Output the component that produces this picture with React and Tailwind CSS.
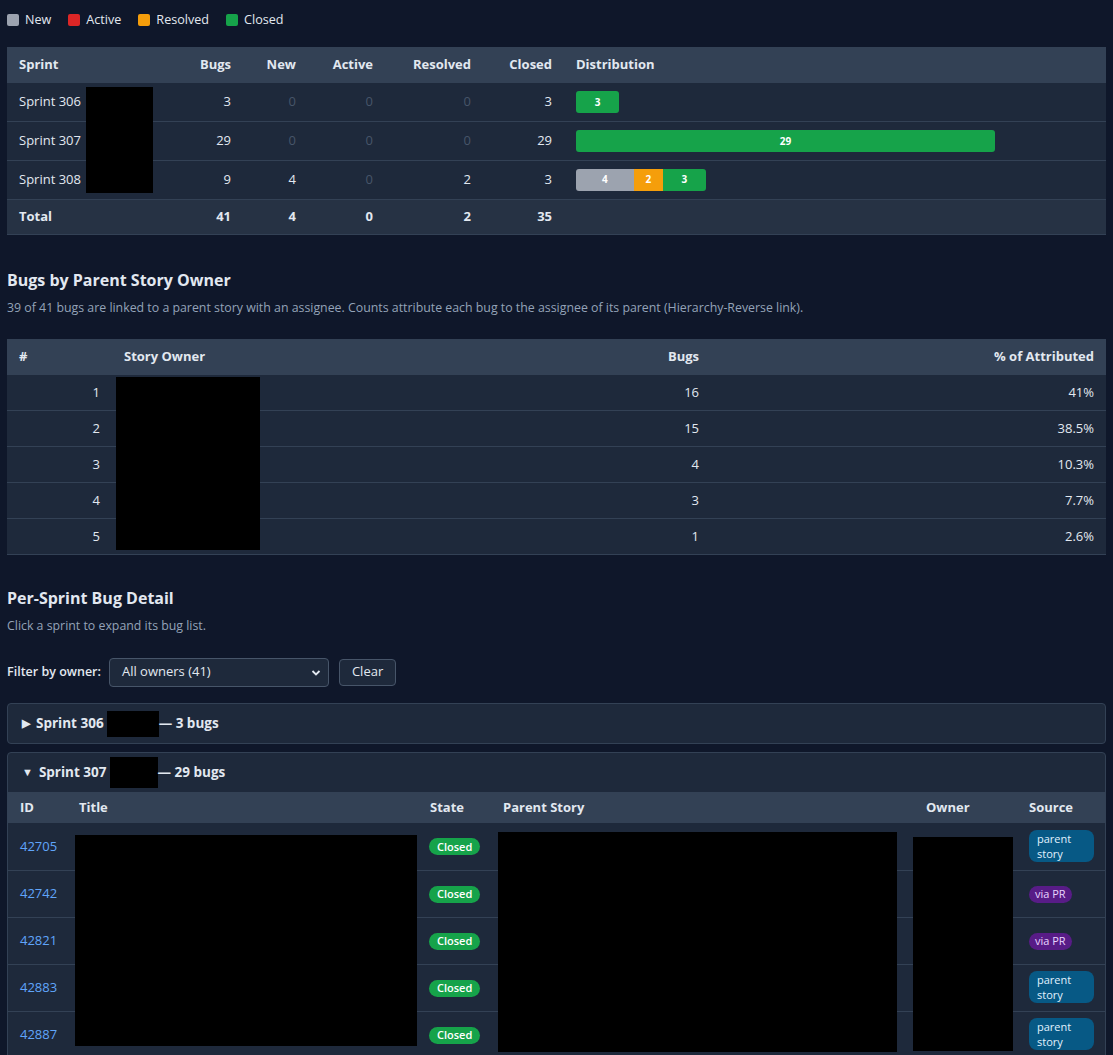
import React from "react";

const F = "font-['Segoe_UI','Open_Sans',sans-serif]";

function Legend() {
  const items = [
    ["New", "bg-[#9ca3af]"],
    ["Active", "bg-[#dc2626]"],
    ["Resolved", "bg-[#f59e0b]"],
    ["Closed", "bg-[#16a34a]"],
  ];
  return (
    <div className="flex items-center gap-[17px] h-[14px] text-[12.6px] text-[#e2e8f0]">
      {items.map(([l, c]) => (
        <div key={l} className="flex items-center gap-[6px]">
          <span className={`inline-block w-[12px] h-[12px] rounded-[2px] ${c}`} />
          <span>{l}</span>
        </div>
      ))}
    </div>
  );
}

const UNIT = 14.45;

function Dist({ n, a, r, c }) {
  const segs = [
    [n, "bg-[#9ca3af]"],
    [a, "bg-[#dc2626]"],
    [r, "bg-[#f59e0b]"],
    [c, "bg-[#16a34a]"],
  ].filter(([v]) => v > 0);
  return (
    <div className="flex h-[22px] rounded-[3px] overflow-hidden w-fit">
      {segs.map(([v, cl], i) => (
        <div
          key={i}
          className={`${cl} flex items-center justify-center text-[10px] font-bold text-white`}
          style={{ width: v * UNIT }}
        >
          {v}
        </div>
      ))}
    </div>
  );
}

function SprintTable() {
  const rows = [
    ["Sprint 306", 3, 0, 0, 0, 3],
    ["Sprint 307", 29, 0, 0, 0, 29],
    ["Sprint 308", 9, 4, 0, 2, 3],
  ];
  const num = (v) => (
    <span className={v === 0 ? "text-[#475569]" : ""}>{v}</span>
  );
  return (
    <div className="relative">
      <table className="w-full table-fixed border-collapse text-[13px] text-[#e2e8f0]">
        <colgroup>
          <col className="w-[163px]" />
          <col className="w-[73px]" />
          <col className="w-[65px]" />
          <col className="w-[77px]" />
          <col className="w-[98px]" />
          <col className="w-[81px]" />
          <col />
        </colgroup>
        <thead>
          <tr className="bg-[#334155] h-[36px] font-semibold">
            <th className="text-left px-[12px]">Sprint</th>
            <th className="text-right px-[12px]">Bugs</th>
            <th className="text-right px-[12px]">New</th>
            <th className="text-right px-[12px]">Active</th>
            <th className="text-right px-[12px]">Resolved</th>
            <th className="text-right px-[12px]">Closed</th>
            <th className="text-left px-[12px]">Distribution</th>
          </tr>
        </thead>
        <tbody>
          {rows.map((r) => (
            <tr key={r[0]} className="bg-[#1e293b] h-[38.7px] border-b border-[#334155]">
              <td className="px-[12px]">{r[0]}</td>
              <td className="px-[12px] text-right">{num(r[1])}</td>
              <td className="px-[12px] text-right">{num(r[2])}</td>
              <td className="px-[12px] text-right">{num(r[3])}</td>
              <td className="px-[12px] text-right">{num(r[4])}</td>
              <td className="px-[12px] text-right">{num(r[5])}</td>
              <td className="px-[12px]">
                <Dist n={r[2]} a={r[3]} r={r[4]} c={r[5]} />
              </td>
            </tr>
          ))}
          <tr className="bg-[#263244] h-[35px] font-bold border-b border-[#334155]">
            <td className="px-[12px]">Total</td>
            <td className="px-[12px] text-right">41</td>
            <td className="px-[12px] text-right">4</td>
            <td className="px-[12px] text-right">0</td>
            <td className="px-[12px] text-right">2</td>
            <td className="px-[12px] text-right">35</td>
            <td />
          </tr>
        </tbody>
      </table>
      <div className="absolute left-[79px] top-[40px] w-[67px] h-[106px] bg-black" />
    </div>
  );
}

function OwnerTable() {
  const rows = [
    [1, 16, "41%"],
    [2, 15, "38.5%"],
    [3, 4, "10.3%"],
    [4, 3, "7.7%"],
    [5, 1, "2.6%"],
  ];
  return (
    <div className="relative">
      <table className="w-full table-fixed border-collapse text-[13px] text-[#e2e8f0]">
        <colgroup>
          <col className="w-[105px]" />
          <col className="w-[400px]" />
          <col />
          <col className="w-[395px]" />
        </colgroup>
        <thead>
          <tr className="bg-[#334155] h-[36px] font-semibold">
            <th className="text-left px-[12px]">#</th>
            <th className="text-left px-[12px]">Story Owner</th>
            <th className="text-right px-[12px]">Bugs</th>
            <th className="text-right px-[12px]">% of Attributed</th>
          </tr>
        </thead>
        <tbody>
          {rows.map((r) => (
            <tr key={r[0]} className="bg-[#1e293b] h-[36px] border-b border-[#334155]">
              <td className="px-[12px] text-right">{r[0]}</td>
              <td className="px-[12px]"></td>
              <td className="px-[12px] text-right">{r[1]}</td>
              <td className="px-[12px] text-right">{r[2]}</td>
            </tr>
          ))}
        </tbody>
      </table>
      <div className="absolute left-[109px] top-[38px] w-[144px] h-[173px] bg-black" />
    </div>
  );
}

function Closed() {
  return (
    <span className="inline-flex items-center h-[17px] px-[8px] rounded-full bg-[#16a34a] text-white text-[11px] font-semibold">
      Closed
    </span>
  );
}

function Source({ pr }) {
  if (pr)
    return (
      <span className="inline-flex items-center h-[17px] px-[6px] rounded-[9px] bg-[#581c87] text-[#e9d5ff] text-[11px]">
        via PR
      </span>
    );
  return (
    <span className="inline-block w-[65px] px-[8px] py-[1px] rounded-[8px] bg-[#075985] text-[#e0f2fe] text-[11px] leading-[15px]">
      parent story
    </span>
  );
}

function BugTable() {
  const bugs = [
    ["42705", false],
    ["42742", true],
    ["42821", true],
    ["42883", false],
    ["42887", false],
  ];
  return (
    <div className="relative">
      <table className="w-full table-fixed border-collapse text-[13px] text-[#e2e8f0]">
        <colgroup>
          <col className="w-[59px]" />
          <col className="w-[351px]" />
          <col className="w-[73px]" />
          <col className="w-[423px]" />
          <col className="w-[103px]" />
          <col />
        </colgroup>
        <thead>
          <tr className="bg-[#334155] h-[31px] font-semibold">
            <th className="text-left px-[12px]">ID</th>
            <th className="text-left px-[12px]">Title</th>
            <th className="text-left px-[12px]">State</th>
            <th className="text-left px-[12px]">Parent Story</th>
            <th className="text-left px-[12px]">Owner</th>
            <th className="text-left px-[12px]">Source</th>
          </tr>
        </thead>
        <tbody>
          {bugs.map(([id, pr]) => (
            <tr key={id} className="h-[47px] border-b border-[#334155]">
              <td className="px-[12px] text-[#60a5fa]">{id}</td>
              <td className="px-[12px]"></td>
              <td className="px-[11px]">
                <Closed />
              </td>
              <td className="px-[12px]"></td>
              <td className="px-[12px]"></td>
              <td className="px-[12px]">
                <Source pr={pr} />
              </td>
            </tr>
          ))}
        </tbody>
      </table>
      <div className="absolute left-[67px] top-[43px] w-[342px] h-[211px] bg-black" />
      <div className="absolute left-[490px] top-[40px] w-[399px] h-[220px] bg-black" />
      <div className="absolute left-[905px] top-[45px] w-[100px] h-[214px] bg-black" />
    </div>
  );
}

export default function App() {
  return (
    <div className={`${F} min-h-[1055px] bg-[#0f172a] text-[#e2e8f0] px-[7px] pt-[13px] pb-[40px]`}>
      <Legend />
      <div className="mt-[20px]">
        <SprintTable />
      </div>

      <h2 className="mt-[33px] text-[16px] font-bold leading-[24px]">Bugs by Parent Story Owner</h2>
      <p className="mt-[7px] text-[12.35px] text-[#94a3b8] leading-[18px]">
        39 of 41 bugs are linked to a parent story with an assignee. Counts attribute each bug to the assignee of its parent (Hierarchy-Reverse link).
      </p>
      <div className="mt-[22px]">
        <OwnerTable />
      </div>

      <h2 className="mt-[31px] text-[16px] font-bold leading-[24px]">Per-Sprint Bug Detail</h2>
      <p className="mt-[7px] text-[12.35px] text-[#94a3b8] leading-[18px]">
        Click a sprint to expand its bug list.
      </p>

      <div className="mt-[22px] flex items-center h-[30px]">
        <span className="text-[12.5px] font-semibold">Filter by owner:</span>
        <div className="ml-[8px] relative w-[220px] h-[29px] rounded-[4px] border border-[#475569] bg-[#1e293b] flex items-center pl-[12px] text-[13px]">
          All owners (41)
          <svg className="absolute right-[7px] top-[10px]" width="10" height="8" viewBox="0 0 10 8">
            <path d="M1.5 2 L5 5.5 L8.5 2" stroke="#e2e8f0" strokeWidth="1.8" fill="none" />
          </svg>
        </div>
        <button className="ml-[10px] h-[27px] px-[12px] rounded-[4px] border border-[#475569] bg-[#1e293b] text-[13px]">
          Clear
        </button>
      </div>

      <div className="mt-[16px] h-[41px] rounded-[4px] border border-[#334155] bg-[#1e293b] flex items-center pl-[14px] text-[13.5px] font-bold">
        <span className="text-[11px] mr-[6px]">▶</span>
        <span>Sprint 306</span>
        <span className="inline-block w-[52px] h-[26px] bg-black ml-[3px]" />
        <span>— 3 bugs</span>
      </div>

      <div className="mt-[8px] rounded-[4px] border border-[#334155] bg-[#1e293b] overflow-hidden">
        <div className="h-[39px] flex items-center pl-[14px] text-[13.5px] font-bold">
          <span className="text-[11px] mr-[6px]">▼</span>
          <span>Sprint 307</span>
          <span className="inline-block w-[48px] h-[31px] bg-black ml-[3px]" />
          <span>— 29 bugs</span>
        </div>
        <BugTable />
      </div>
    </div>
  );
}
